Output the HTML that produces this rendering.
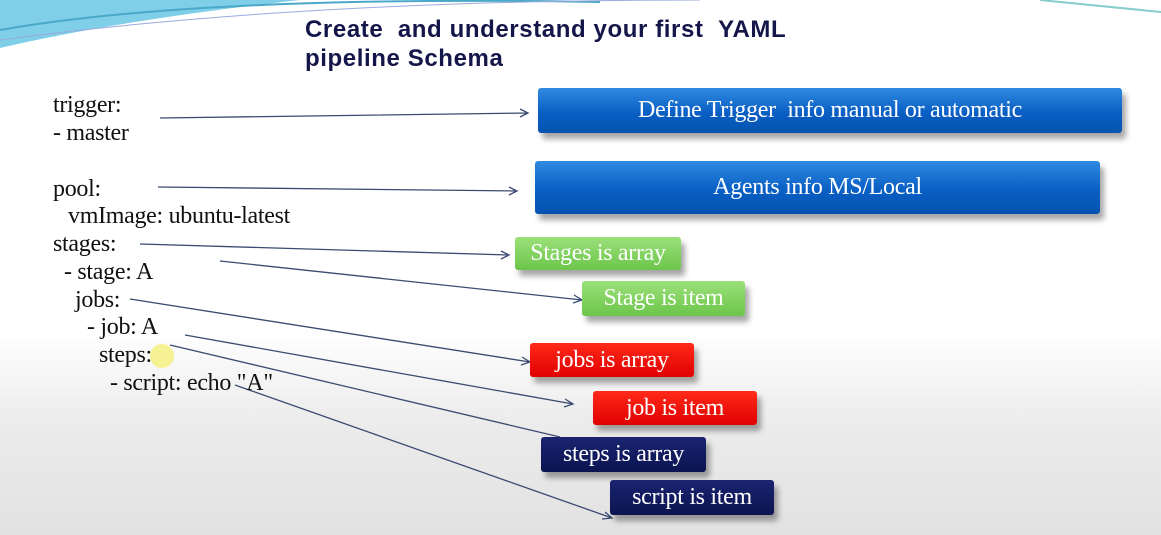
<!DOCTYPE html>
<html><head><style>
body{margin:0;width:1161px;height:535px;overflow:hidden;position:relative;font-family:"Liberation Serif",serif;
background:linear-gradient(#fff 0,#fff 330px,#ececec 420px,#e2e2e2 535px);}
.t{position:absolute;left:305px;top:15px;font:bold 24px "Liberation Sans",sans-serif;letter-spacing:0.6px;color:#14164a;line-height:29px;}
.c{position:absolute;font-size:24px;color:#111;white-space:nowrap;letter-spacing:-0.3px;}
.b{position:absolute;color:#fff;font-size:24px;letter-spacing:-0.3px;display:flex;align-items:center;justify-content:center;border-radius:3px;box-shadow:4px 6px 6px rgba(0,0,0,.35);}
.blue{background:linear-gradient(#2f8ae0,#0a5fc4 55%,#0553b0);}
.green{background:linear-gradient(#9be07a,#6cc64a);}
.red{background:linear-gradient(#ff2a1a,#e00000);}
.navy{background:linear-gradient(#1a2470,#0b1450);}
</style></head><body>
<svg style="position:absolute;left:0;top:0" width="1161" height="535">
<path d="M0 0 L300 0 Q120 20 0 48 Z" fill="#7fcfe8"/>
<path d="M0 30 Q200 -5 600 2" stroke="#4aa8c8" stroke-width="2" fill="none"/>
<path d="M0 40 Q300 0 700 0" stroke="#9ad" stroke-width="1" fill="none"/>
<path d="M1040 0 Q1100 6 1161 12" stroke="#8cc" stroke-width="2" fill="none"/>
<g stroke="#3a4a70" stroke-width="1.3" fill="none">
<path d="M160 118 L528 113 M520 109 L528 113 L520 117"/>
<path d="M158 187 L517 191 M509 187 L517 191 L509 195"/>
<path d="M140 244 L509 255 M501 251 L509 255 L501 259"/>
<path d="M220 261 L582 300 M574 295 L582 300 L573 303"/>
<path d="M130 299 L530 362 M522 357 L530 362 L521 365"/>
<path d="M185 335 L573 404 M565 399 L573 404 L564 407"/>
<path d="M170 345 L560 437"/>
<path d="M235 385 L612 518 M605 512 L612 518 L602 519"/>
</g>
<circle cx="162" cy="356" r="12" fill="#f5f07a" opacity=".8"/>
</svg>
<div class="t">Create &nbsp;and understand your first &nbsp;YAML<br>pipeline Schema</div>
<div class="c" style="left:53px;top:92px">trigger:</div>
<div class="c" style="left:53px;top:120px">- master</div>
<div class="c" style="left:53px;top:176px">pool:</div>
<div class="c" style="left:68px;top:203px">vmImage: ubuntu-latest</div>
<div class="c" style="left:53px;top:231px">stages:</div>
<div class="c" style="left:64px;top:259px">- stage: A</div>
<div class="c" style="left:75px;top:287px">jobs:</div>
<div class="c" style="left:87px;top:314px">- job: A</div>
<div class="c" style="left:99px;top:342px">steps:</div>
<div class="c" style="left:110px;top:370px">- script: echo "A"</div>
<div class="b blue" style="left:538px;top:88px;width:584px;height:45px">Define Trigger &nbsp;info manual or automatic</div>
<div class="b blue" style="left:535px;top:161px;width:565px;height:53px">Agents info MS/Local</div>
<div class="b green" style="left:515px;top:237px;width:166px;height:33px">Stages is array</div>
<div class="b green" style="left:582px;top:281px;width:163px;height:35px">Stage is item</div>
<div class="b red" style="left:530px;top:343px;width:164px;height:34px">jobs is array</div>
<div class="b red" style="left:593px;top:391px;width:164px;height:34px">job is item</div>
<div class="b navy" style="left:541px;top:437px;width:165px;height:35px">steps is array</div>
<div class="b navy" style="left:610px;top:480px;width:164px;height:35px">script is item</div>
</body></html>
